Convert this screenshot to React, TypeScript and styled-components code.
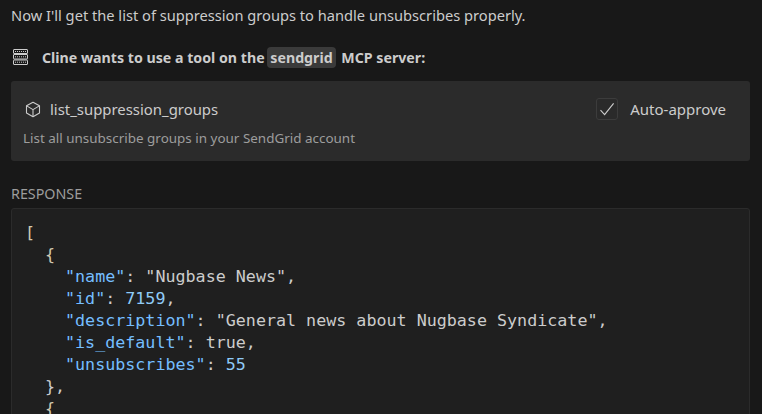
import React from 'react';
import styled, { createGlobalStyle } from 'styled-components';

const GlobalStyle = createGlobalStyle`
  html, body {
    margin: 0;
    height: 100%;
    background: #181818;
    overflow: hidden;
  }
`;

const Page = styled.div`
  width: 762px;
  height: 414px;
  box-sizing: border-box;
  padding: 5px 12px 0 11px;
  overflow: hidden;
  font-family: 'Noto Sans', sans-serif;
  font-size: 14px;
  color: #cccccc;
`;

const Intro = styled.p`
  margin: 0;
  line-height: 21px;
  font-size: 14.65px;
`;

const ToolHeader = styled.div`
  display: flex;
  align-items: center;
  gap: 14px;
  height: 22px;
  margin-top: 20px;
  padding-left: 2px;
  font-size: 14.2px;
  font-weight: 700;
  color: #cccccc;
`;

const ServerName = styled.span`
  background: #3a3a3a;
  border-radius: 4px;
  padding: 1px 3px;
  margin: 0 2px 0 -1px;
`;

const ToolCard = styled.div`
  margin-top: 13px;
  height: 80px;
  box-sizing: border-box;
  padding: 16px 12px 0 12px;
  background: #2b2b2b;
  border-radius: 3px;
`;

const ToolRow = styled.div`
  display: flex;
  align-items: center;
  justify-content: space-between;
  height: 24px;
`;

const ToolName = styled.div`
  display: flex;
  align-items: center;
  gap: 9px;
  padding-left: 2px;
  font-size: 14.9px;
  color: #cccccc;
`;

const Approve = styled.label`
  display: flex;
  align-items: center;
  gap: 12px;
  margin-right: 12px;
  font-size: 15px;
  color: #cccccc;
`;

const CheckBox = styled.span`
  display: flex;
  align-items: center;
  justify-content: center;
  width: 20px;
  height: 20px;
  background: #2a2a2a;
  border: 1px solid #3c3c3c;
  border-radius: 3px;
`;

const ToolDescription = styled.div`
  margin-top: 8px;
  font-size: 13.45px;
  line-height: 18px;
  color: #9d9d9d;
`;

const ResponseLabel = styled.div`
  margin-top: 24px;
  font-size: 14.3px;
  line-height: 18px;
  color: #9d9d9d;
`;

const CodeBlock = styled.div`
  margin-top: 5px;
  padding: 12px 13px;
  height: 260px;
  box-sizing: border-box;
  background: #1f1f1f;
  border: 1px solid #2b2b2b;
  border-radius: 3px;
  font-family: 'DejaVu Sans Mono', monospace;
  font-size: 16.7px;
  line-height: 22px;
  color: #cccccc;
  overflow: hidden;
`;

const CodeLine = styled.div<{ $indent?: number }>`
  height: 22px;
  white-space: pre;
  padding-left: ${(p) => (p.$indent ?? 0) * 20}px;
`;

const JsonKey = styled.span`
  color: #75beff;
`;

const JsonNumber = styled.span`
  color: #8fcbf7;
`;

const Bracket = styled.span`
  color: #d0c8b0;
`;

const ServerIcon = () => (
  <svg width="15" height="16" viewBox="0 0 15 16" fill="none" stroke="#cccccc" strokeWidth="1">
    <rect x="0.5" y="0.5" width="14" height="4" rx="0.5" />
    <rect x="0.5" y="5.5" width="14" height="4.5" rx="0.5" />
    <rect x="0.5" y="11" width="14" height="4.5" rx="0.5" />
    <path d="M2 2.5h11M2 7.8h11M2 13.2h11" strokeDasharray="1 1" />
  </svg>
);

const CubeIcon = () => (
  <svg width="16" height="17" viewBox="0 0 16 17" fill="none" stroke="#cccccc" strokeWidth="1.1" strokeLinejoin="round">
    <path d="M8 1.2 14.5 4.8v7.2L8 15.8 1.5 12V4.8z" />
    <path d="M1.7 4.9 8 8.6l6.3-3.7M8 8.6v7" />
  </svg>
);

const CheckIcon = () => (
  <svg width="18" height="18" viewBox="0 0 18 18" fill="none" stroke="#cccccc" strokeWidth="1.1">
    <path d="M2.5 10.2 6.6 14.6 15.6 3.4" />
  </svg>
);

const App: React.FC = () => {
  return (
    <Page>
      <GlobalStyle />
      <Intro>Now I'll get the list of suppression groups to handle unsubscribes properly.</Intro>

      <ToolHeader>
        <ServerIcon />
        <span>
          Cline wants to use a tool on the <ServerName>sendgrid</ServerName> MCP server:
        </span>
      </ToolHeader>

      <ToolCard>
        <ToolRow>
          <ToolName>
            <CubeIcon />
            list_suppression_groups
          </ToolName>
          <Approve>
            <CheckBox>
              <CheckIcon />
            </CheckBox>
            Auto-approve
          </Approve>
        </ToolRow>
        <ToolDescription>List all unsubscribe groups in your SendGrid account</ToolDescription>
      </ToolCard>

      <ResponseLabel>RESPONSE</ResponseLabel>
      <CodeBlock>
        <CodeLine><Bracket>[</Bracket></CodeLine>
        <CodeLine $indent={1}><Bracket>{'{'}</Bracket></CodeLine>
        <CodeLine $indent={2}><JsonKey>"name"</JsonKey>: "Nugbase News",</CodeLine>
        <CodeLine $indent={2}><JsonKey>"id"</JsonKey>: <JsonNumber>7159</JsonNumber>,</CodeLine>
        <CodeLine $indent={2}><JsonKey>"description"</JsonKey>: "General news about Nugbase Syndicate",</CodeLine>
        <CodeLine $indent={2}><JsonKey>"is_default"</JsonKey>: true,</CodeLine>
        <CodeLine $indent={2}><JsonKey>"unsubscribes"</JsonKey>: <JsonNumber>55</JsonNumber></CodeLine>
        <CodeLine $indent={1}>{'},'}</CodeLine>
        <CodeLine $indent={1}><Bracket>{'{'}</Bracket></CodeLine>
      </CodeBlock>
    </Page>
  );
};

export default App;
